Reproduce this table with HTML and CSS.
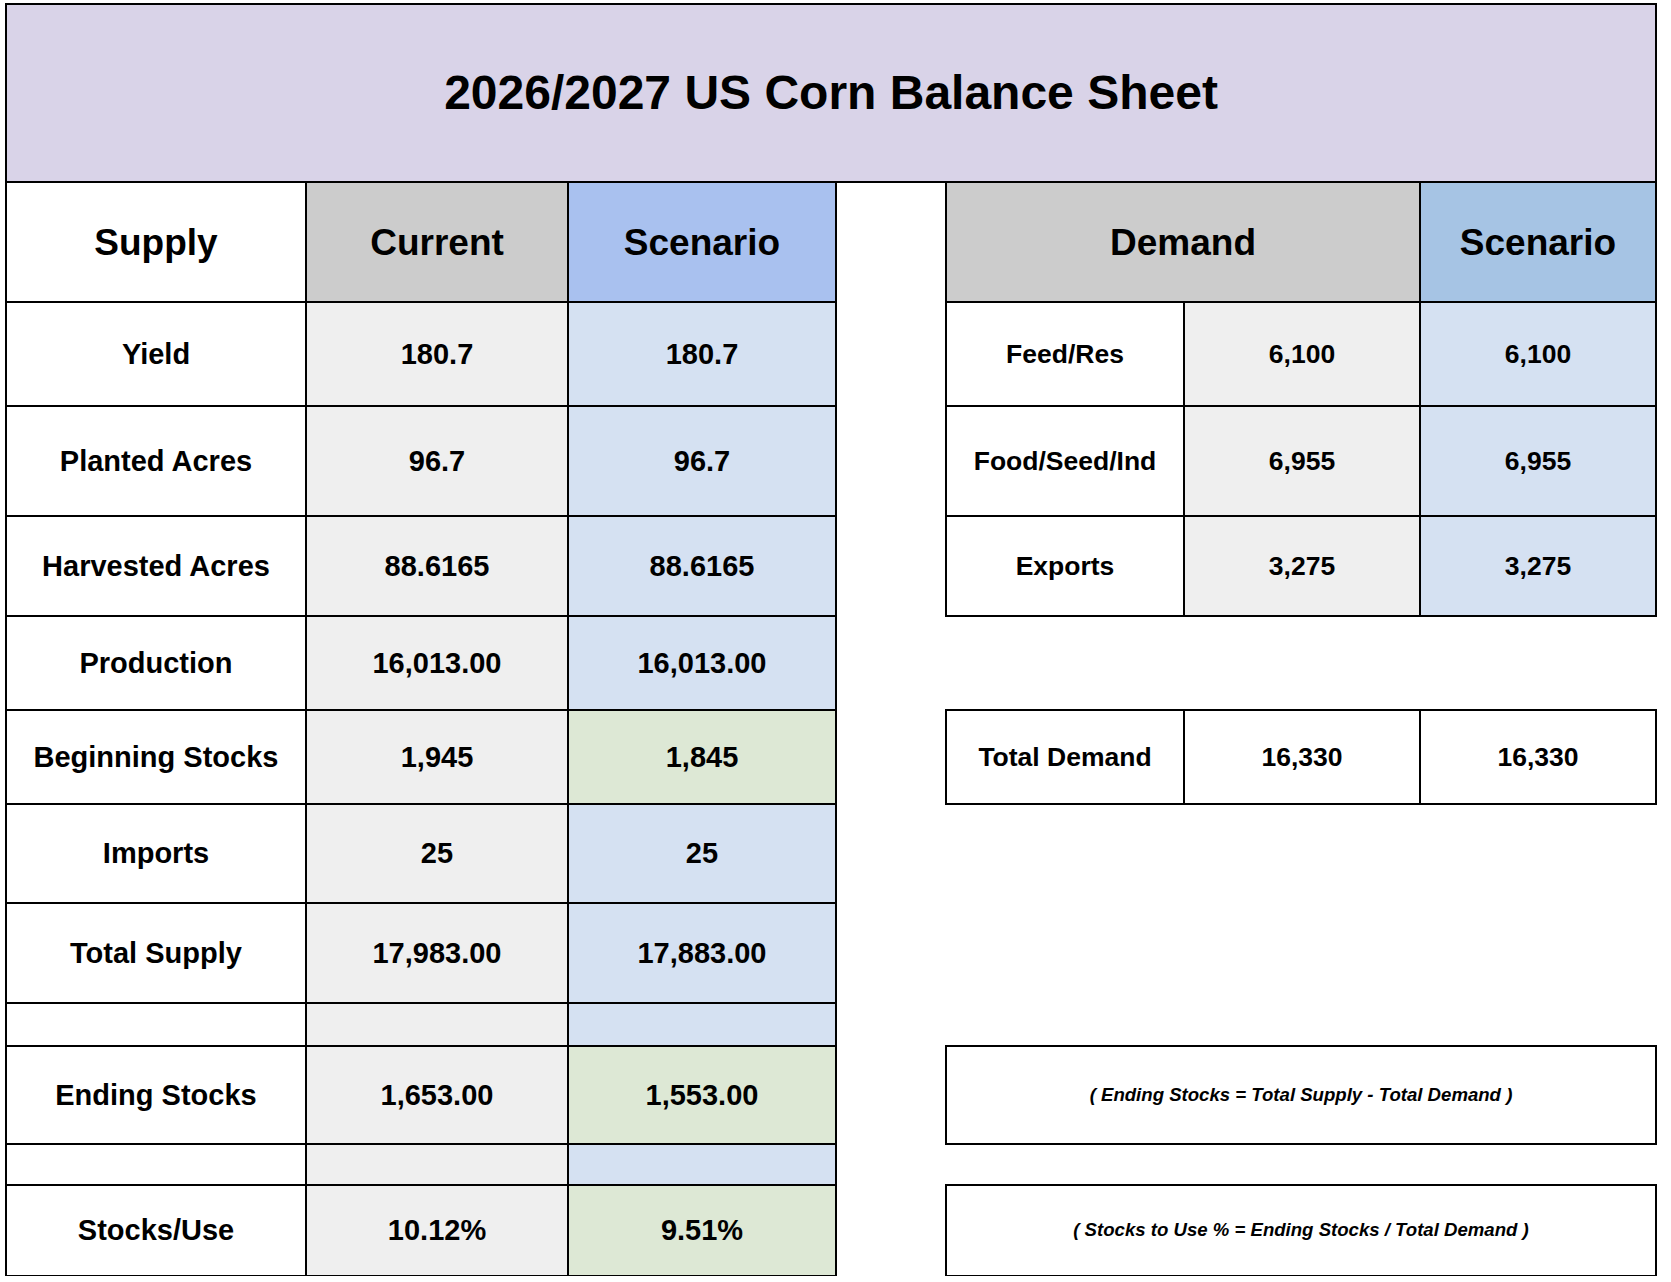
FILE: index.html
```html
<!DOCTYPE html>
<html lang="en">
<head>
<meta charset="utf-8">
<title>2026/2027 US Corn Balance Sheet</title>
<link rel="stylesheet" href="styles.css">
</head>
<body>
<div class="sheet">
  <div class="cell title">2026/2027 US Corn Balance Sheet</div>

  <div class="cell head c1">Supply</div>
  <div class="cell head c2 gray-h">Current</div>
  <div class="cell head c3 blue-h">Scenario</div>
  <div class="cell head c56 gray-h">Demand</div>
  <div class="cell head c7 blue-h2">Scenario</div>

  <div class="cell c1">Yield</div>
  <div class="cell c2 gray">180.7</div>
  <div class="cell c3 blue">180.7</div>
  <div class="cell sm c5">Feed/Res</div>
  <div class="cell sm c6 gray">6,100</div>
  <div class="cell sm c7 blue">6,100</div>

  <div class="cell c1">Planted Acres</div>
  <div class="cell c2 gray">96.7</div>
  <div class="cell c3 blue">96.7</div>
  <div class="cell sm c5">Food/Seed/Ind</div>
  <div class="cell sm c6 gray">6,955</div>
  <div class="cell sm c7 blue">6,955</div>

  <div class="cell c1">Harvested Acres</div>
  <div class="cell c2 gray">88.6165</div>
  <div class="cell c3 blue">88.6165</div>
  <div class="cell sm c5">Exports</div>
  <div class="cell sm c6 gray">3,275</div>
  <div class="cell sm c7 blue">3,275</div>

  <div class="cell c1">Production</div>
  <div class="cell c2 gray">16,013.00</div>
  <div class="cell c3 blue">16,013.00</div>

  <div class="cell c1">Beginning Stocks</div>
  <div class="cell c2 gray">1,945</div>
  <div class="cell c3 green">1,845</div>
  <div class="cell sm c5">Total Demand</div>
  <div class="cell sm c6">16,330</div>
  <div class="cell sm c7">16,330</div>

  <div class="cell c1">Imports</div>
  <div class="cell c2 gray">25</div>
  <div class="cell c3 blue">25</div>

  <div class="cell c1">Total Supply</div>
  <div class="cell c2 gray">17,983.00</div>
  <div class="cell c3 blue">17,883.00</div>

  <div class="cell c1"></div>
  <div class="cell c2 gray"></div>
  <div class="cell c3 blue"></div>

  <div class="cell c1">Ending Stocks</div>
  <div class="cell c2 gray">1,653.00</div>
  <div class="cell c3 green">1,553.00</div>
  <div class="cell formula c57">( Ending Stocks = Total Supply - Total Demand )</div>

  <div class="cell c1"></div>
  <div class="cell c2 gray"></div>
  <div class="cell c3 blue"></div>

  <div class="cell c1">Stocks/Use</div>
  <div class="cell c2 gray">10.12%</div>
  <div class="cell c3 green">9.51%</div>
  <div class="cell formula c57">( Stocks to Use % = Ending Stocks / Total Demand )</div>
</div>
</body>
</html>
```

FILE: styles.css
```css
html, body {
  margin: 0;
  padding: 0;
  background: #ffffff;
}

body {
  font-family: "Liberation Sans", Arial, Helvetica, sans-serif;
  color: #000;
}

.sheet {
  display: grid;
  grid-template-columns: 300px 262px 268px 110px 238px 236px 236px;
  grid-template-rows: 178px 120px 104px 110px 100px 94px 94px 99px 100px 43px 98px 41px 91px;
  padding: 4px 0 0 6px;
  width: 1650px;
}

.cell {
  margin: -1px;
  border: 2px solid #000;
  display: flex;
  align-items: center;
  justify-content: center;
  text-align: center;
  font-weight: bold;
  font-size: 29px;
  line-height: 1;
  background: #fff;
  min-width: 0;
}

.title {
  grid-column: 1 / -1;
  background: #d9d3e8;
  font-size: 48px;
}

.head {
  font-size: 37px;
}

.sm {
  font-size: 26.5px;
}

.formula {
  font-size: 18.6px;
  font-style: italic;
}

.c1 { grid-column: 1; }
.c2 { grid-column: 2; }
.c3 { grid-column: 3; }
.c5 { grid-column: 5; }
.c6 { grid-column: 6; }
.c7 { grid-column: 7; }
.c56 { grid-column: 5 / 7; }
.c57 { grid-column: 5 / 8; }

.gray-h { background: #cccccc; }
.blue-h { background: #a9c1ef; }
.blue-h2 { background: #a6c4e4; }
.gray { background: #efefef; }
.blue { background: #d5e1f2; }
.green { background: #dde8d5; }
```
